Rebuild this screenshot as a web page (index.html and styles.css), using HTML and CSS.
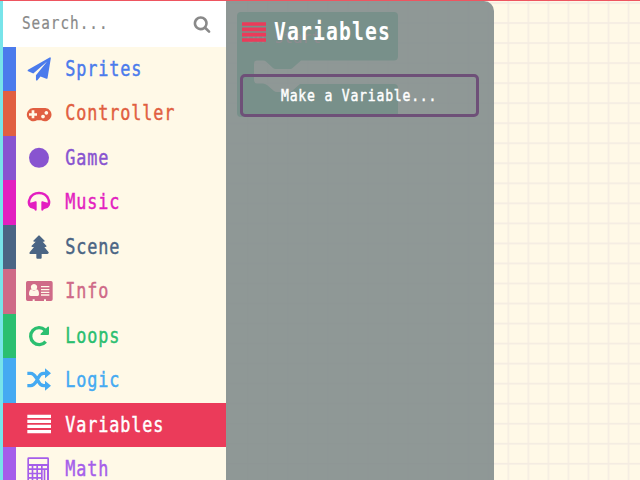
FILE: index.html
```
<!DOCTYPE html>
<html lang="en">
<head>
<meta charset="utf-8">
<title>Blocks editor</title>
<link rel="stylesheet" href="styles.css">
</head>
<body>
<div class="editor">
  <nav class="toolbox">
    <div class="search"><span class="label search-label">Search...</span>
      <svg class="search-icon" viewBox="0 0 1792 1792"><path d="M1216 832q0-185-131.500-316.500t-316.500-131.500-316.500 131.500-131.500 316.500 131.500 316.500 316.500 131.500 316.500-131.500 131.500-316.500zm512 832q0 52-38 90t-90 38q-54 0-90-38l-343-342q-179 124-399 124-143 0-273.500-55.500t-225-150-150-225-55.500-273.500 55.500-273.500 150-225 225-150 273.500-55.500 273.500 55.500 225 150 150 225 55.500 273.500q0 220-124 399l343 343q37 37 37 90z"/></svg>
    </div>
    <div class="row sprites"><svg class="icon" viewBox="0 0 81 81"><path transform="translate(5 4) scale(.0388)" d="M1764 11q33 24 27 64l-256 1536q-5 29-32 45-14 8-31 8-11 0-24-5l-453-185-242 295q-18 23-49 23-13 0-22-4-19-7-30.500-23.500t-11.500-36.500v-349l864-1059-1069 925-395-162q-37-14-40-55-2-40 32-59l1664-960q15-9 32-9 20 0 36 11z"/></svg><span class="label">Sprites</span></div>
    <div class="row controller"><svg class="icon" viewBox="0 0 81 81"><path fill-rule="evenodd" d="M21 24H58A20 20 0 1 1 46 61H33A20 20 0 1 1 21 24ZM17 31V40H9V47H17V55H25V47H33V40H25V31ZM51 44a5.500 5.500 0 1 0 .1 0ZM61 33a5.500 5.500 0 1 0 .1 0Z"/></svg><span class="label">Controller</span></div>
    <div class="row game"><svg class="icon" viewBox="0 0 81 81"><circle cx="39" cy="38.500" r="30"/></svg><span class="label">Game</span></div>
    <div class="row music"><svg class="icon" viewBox="0 0 81 81"><path d="M12 51C7 43 8 36 11 30C21 6 57 6 67 30C70 36 71 43 66 51" fill="none" stroke="currentColor" stroke-width="7"/><path d="M10 42L24 38L28 37Q32 36 32 40V62Q32 65 29 65Q26 65 25 61L12 56Q7 52 8 43ZM68 42L54 38L50 37Q46 36 46 40V62Q46 65 49 65Q52 65 53 61L66 56Q71 52 70 43Z"/></svg><span class="label">Music</span></div>
    <div class="row scene"><svg class="icon" viewBox="0 0 81 81"><path d="M37 5Q39 3 41 5L56 20Q57 23 53 23H50L61 35Q63 39 58 39H55L68 55Q69 60 64 60H47V71Q47 74 44 74H34Q31 74 31 71V60H14Q9 60 11 55L24 39H20Q15 39 17 35L29 23H25Q21 23 22 20Z"/></svg><span class="label">Scene</span></div>
    <div class="row info"><svg class="icon" viewBox="0 0 81 81"><path fill-rule="evenodd" d="M5 9H75Q80 9 80 14V64Q80 69 75 69H60V64H54V69H26V64H20V69H5Q0 69 0 64V14Q0 9 5 9ZM24 18a9.500 9.500 0 1 0 .1 0ZM16 34Q9 36 9 49Q9 54 14 54H35Q39 54 39 49Q39 36 32 34Q24 42 16 34ZM45 24V28H70V24ZM45 33V37H70V33ZM45 41V45H70V41ZM45 49V53H70V49Z"/></svg><span class="label">Info</span></div>
    <div class="row loops"><svg class="icon" viewBox="0 0 81 81"><path d="M57 21A25.500 25.500 0 1 0 59 56" fill="none" stroke="currentColor" stroke-width="10"/><path d="M69 12V33Q69 36 66 36H45Q42 34 44 32L65 11Q68 9 69 12Z"/></svg><span class="label">Loops</span></div>
    <div class="row logic"><svg class="icon" viewBox="0 0 81 81"><g fill="none" stroke="currentColor" stroke-width="10"><path d="M4 19H14Q23 19 31 33L37 43Q43 56 53 56H61M4 56H14Q23 56 31 43L37 32Q43 19 53 19H61"/></g><path d="M57 4L75 19L57 34ZM57 41L75 56L57 71Z"/></svg><span class="label">Logic</span></div>
    <div class="row variables"><svg class="icon" viewBox="0 0 81 81"><path d="M4 8.500H75V18H4ZM4 23.500H75V33H4ZM4 38.500H75V48H4ZM4 54H75V64H4Z"/></svg><span class="label">Variables</span></div>
    <div class="row math"><svg class="icon" viewBox="0 0 81 81"><path fill-rule="evenodd" d="M8 4H65Q69 4 69 8V76Q69 80 65 80H8Q4 80 4 76V8Q4 4 8 4ZM9 9V24H64V9ZM9 30V37H17V30ZM22 30V37H31V30ZM36 30V37H45V30ZM50 30V37H63V30ZM9 42V50H17V42ZM22 42V50H31V42ZM36 42V50H45V42ZM50 42V75H53V42ZM58 42V75H63V42ZM9 55V63H17V55ZM22 55V63H31V55ZM36 55V63H45V55ZM9 68V75H17V68ZM22 68V75H31V68ZM36 68V75H45V68Z"/></svg><span class="label">Math</span></div>
  </nav>
  <main class="workspace">
    <svg class="canvas" width="414" height="479" viewBox="226 1 414 479">
      <defs><pattern id="grid" x="507.500" y="22.200" width="20.030" height="20.030" patternUnits="userSpaceOnUse"><path d="M.8 0V20.030M0 .8H20.030" fill="none" stroke="#f4ece2" stroke-width="1.500"/></pattern></defs>
      <rect x="226" y="1" width="414" height="479" fill="url(#grid)"/>
      <path fill="#15aa6e" d="M241 12H394Q398 12 398 16V56Q398 60.500 394 60.500H301L292 68.500Q291 69 289 69H276Q274 69 273 68L266 61.500Q265 60.500 263 60.500H257Q254 60.500 254 64V80Q254 83.500 257 83.500H263Q265 83.500 267 85L274 91Q275 92 277 92H289Q291 92 292 91L300 84H394Q398 84 398 88V113Q398 117 394 117H241Q237 117 237 113V16Q237 12 241 12Z"/>
      <text class="block-text" x="246" y="42.500" textLength="75" lengthAdjust="spacingAndGlyphs">on start</text>
    </svg>
    <section class="flyout">
      <header class="heading"><svg class="heading-icon" viewBox="0 0 73 59"><path d="M0 0H73V11H0ZM0 16H73V27H0ZM0 32H73V43H0ZM0 48H73V59H0Z"/></svg><span class="label title">Variables</span></header>
      <div class="make"><span class="label make-label">Make a Variable...</span></div>
    </section>
  </main>
</div>
</body>
</html>
```
FILE: styles.css
```
* { box-sizing: border-box; }
body { margin: 0; overflow: hidden; background: #fff9e7; font-family: "DejaVu Sans Mono", monospace; }
.editor { display: flex; width: 640px; height: 480px; overflow: hidden; border-top: 1px solid #ee5560; }
.toolbox { flex: 0 0 226px; padding-left: 3.300px; background: linear-gradient(to right, #78e4ea 3.300px, #fff9e7 3.300px); }
.search { display: flex; align-items: center; justify-content: space-between; height: 45.800px; padding: 0 15px 0 18.500px; background: #fff; color: #898989; }
.search-icon { width: 18px; height: 18px; fill: currentColor; }
.label { display: block; width: max-content; font-size: 20.500px; line-height: 1; letter-spacing: 1.070px; white-space: pre; transform: translate(.3px, .2px) scaleX(.82); transform-origin: left center; -webkit-text-stroke: .45px currentColor; }
.search .search-label { font-size: 17.500px; letter-spacing: 1.200px; -webkit-text-stroke-width: .2px; transform: scaleX(.82); }
.row { display: flex; align-items: center; height: 44.500px; padding-left: 22.800px; color: var(--tone); background: linear-gradient(to right, var(--tone) 13.400px, transparent 13.400px); }
.icon { flex: none; width: 27px; height: 27px; margin-right: 12.200px; fill: currentColor; }
.sprites { --tone: #4b7bec; }
.controller { --tone: #e15f41; }
.game { --tone: #8854d0; }
.music { --tone: #e31fc0; }
.scene { --tone: #4b6584; }
.info { --tone: #cf6a87; }
.loops { --tone: #2bbf70; }
.logic { --tone: #45aaf2; }
.row.variables { background: #eb3b5a; color: #fff; }
.math { --tone: #a55eea; }
.workspace { position: relative; flex: 1; }
.canvas { position: absolute; left: 0; top: 0; }
.block-text { font-size: 16px; fill: #ff80b0; }
.flyout { position: relative; width: 268px; height: 479px; padding: 20px 14.500px; border-radius: 0 10px 0 0; background: rgba(131, 141, 141, .9); }
.heading { display: flex; align-items: center; height: 21px; padding-left: 1px; color: #fff; }
.heading-icon { width: 24.300px; height: 20px; margin-right: 8.500px; fill: #eb3b5a; }
.title { font-size: 24px; font-weight: bold; letter-spacing: 1.400px; -webkit-text-stroke-width: 0; transform: translateY(-.5px) scaleX(.82); }
.make { display: flex; align-items: center; width: 239px; height: 43px; margin-top: 32px; padding-left: 38px; border: 3px solid #6e5078; border-radius: 5px; color: #fff; }
.flyout .make { margin-left: -.200px; }
.make-label { font-size: 16px; letter-spacing: .950px; transform: translateY(-.5px) scaleX(.82); }
```
